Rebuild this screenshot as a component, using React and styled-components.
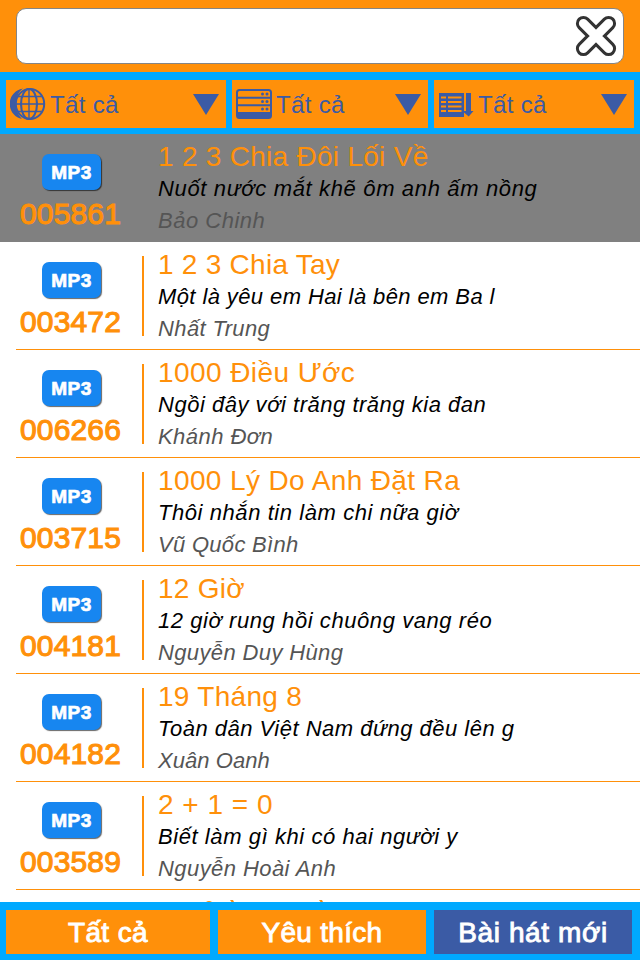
import React from "react";
import styled, { createGlobalStyle } from "styled-components";

const ORANGE = "#ff900a";
const SKY = "#00a9ff";
const NAVY = "#3b5ba5";

const GlobalStyle = createGlobalStyle`
  * { box-sizing: border-box; }
  html, body { margin: 0; padding: 0; overflow: hidden; background: #fff; }
  body { font-family: "Liberation Sans", Arial, Helvetica, sans-serif; }
`;

const Screen = styled.div`
  width: 640px;
  height: 960px;
  display: flex;
  flex-direction: column;
  overflow: hidden;
  background: #fff;
`;

const Header = styled.header`
  flex: none;
  height: 72px;
  padding: 8px 16px;
  background: ${ORANGE};
`;

const SearchField = styled.div`
  height: 56px;
  display: flex;
  align-items: center;
  justify-content: flex-end;
  padding-right: 6px;
  background: #fff;
  border: 1px solid #858585;
  border-radius: 10px;
`;

const FilterBar = styled.div`
  flex: none;
  height: 62px;
  display: grid;
  grid-template-columns: 220px 196px 200px;
  grid-template-rows: 48px;
  column-gap: 6px;
  padding: 8px 6px 6px;
  background: ${SKY};
`;

const Filter = styled.button`
  display: flex;
  align-items: center;
  border: 0;
  padding: 0 7px 0 4px;
  background: ${ORANGE};
  color: ${NAVY};
  font-family: inherit;
  font-size: 24px;
  line-height: 46px;
  text-align: left;

  svg { flex: none; display: block; }
`;

const FilterLabel = styled.span`
  flex: 1;
  padding: 1px 0 0 4px;
  letter-spacing: 0.35px;
  white-space: nowrap;
`;

const List = styled.main`
  flex: 1;
  min-height: 0;
  overflow: hidden;
`;

const Row = styled.article`
  height: 108px;
  display: flex;
  background: ${(p) => (p.$selected ? "#808080" : "#fff")};
  background-image: ${(p) =>
    p.$selected ? "none" : `linear-gradient(${ORANGE}, ${ORANGE})`};
  background-size: 624px 1px;
  background-position: 16px 107px;
  background-repeat: no-repeat;
`;

const CodeColumn = styled.div`
  width: 144px;
  height: 80px;
  margin-top: 14px;
  padding-top: 6px;
  border-right: 2px solid ${(p) => (p.$selected ? "transparent" : ORANGE)};
`;

const Badge = styled.div`
  width: 59px;
  height: 36px;
  margin-left: 42px;
  border-radius: 7px;
  background: #1786f0;
  box-shadow: 1px 1px 1px rgba(0, 0, 0, 0.6);
  color: #fff;
  font-size: 19px;
  font-weight: 700;
  line-height: 37px;
  letter-spacing: 0.4px;
  text-align: center;
  -webkit-text-stroke: 0.7px #fff;
`;

const Code = styled.div`
  margin: 6px 0 0 20px;
  color: ${ORANGE};
  font-size: 30px;
  line-height: 36px;
  letter-spacing: 0.15px;
  -webkit-text-stroke: 1.1px ${ORANGE};
`;

const Info = styled.div`
  padding: 6px 0 0 14px;
  white-space: nowrap;
`;

const Title = styled.div`
  height: 34px;
  line-height: 34px;
  font-size: 28px;
  letter-spacing: ${(p) => p.$spacing}px;
  color: ${ORANGE};
`;

const Lyric = styled.div`
  height: 32px;
  line-height: 30px;
  font-size: 22px;
  font-style: italic;
  letter-spacing: ${(p) => p.$spacing}px;
  color: #000;
`;

const Artist = styled(Lyric)`
  color: #555;
`;

const NextRowEdge = styled.svg`
  display: block;
  width: 640px;
  height: 12px;
`;

const TabBar = styled.nav`
  flex: none;
  height: 58px;
  display: grid;
  grid-template-columns: 204px 208px 198px;
  grid-template-rows: 44px;
  column-gap: 8px;
  padding: 8px 6px 6px;
  background: ${SKY};
`;

const Tab = styled.button`
  border: 0;
  padding: 1px 0 0;
  background: ${(p) => (p.$active ? NAVY : ORANGE)};
  color: #fff;
  font-family: inherit;
  font-size: 28px;
  line-height: 43px;
  letter-spacing: ${(p) => p.$spacing}px;
  -webkit-text-stroke: 0.9px #fff;
`;

const ClearIcon = () => (
  <svg width="42" height="42" viewBox="0 0 42 42" strokeLinecap="round">
    <path d="M8.4 8.4L33.6 33.6M33.6 8.4L8.4 33.6" stroke="#333" strokeWidth="15" />
    <path d="M8.4 8.4L33.6 33.6M33.6 8.4L8.4 33.6" stroke="#fff" strokeWidth="9" />
  </svg>
);

const GlobeIcon = () => (
  <svg width="36" height="34" viewBox="0 0 36 34" fill="none" stroke={NAVY}>
    <path d="M13 1.5C-4.5 5 -4.5 28 12 32C4 25 4 9 13 1.5Z" fill={NAVY} stroke="none" />
    <circle cx="19.8" cy="17" r="16.4" fill={ORANGE} stroke="none" />
    <path d="M12 2C-3.5 7 -3.5 26 12 31.5C4 25 4 9 12 2Z" fill={NAVY} stroke="none" />
    <ellipse cx="20" cy="17" rx="14.2" ry="15" strokeWidth="2" />
    <ellipse cx="19" cy="17" rx="8" ry="15" strokeWidth="2.1" />
    <path d="M19 2V32M6 17H34M8 9.5H31.5M8 24.5H31.5" strokeWidth="1.4" />
  </svg>
);

const ServerIcon = () => (
  <svg width="36" height="30" viewBox="0 0 36 30">
    <rect x="1" y="1" width="34" height="28" rx="2.5" fill="none" stroke={NAVY} strokeWidth="2" />
    <path d="M1 8.7H35M1 16.3H35" stroke={NAVY} strokeWidth="2" />
    <path d="M1 23H35V26.5Q35 29 32.5 29H3.5Q1 29 1 26.5Z" fill={NAVY} />
    {[5, 12.5, 20].map((y) => (
      <g key={y} fill={NAVY}>
        <circle cx="26.5" cy={y} r="1.5" />
        <circle cx="31" cy={y} r="1.5" />
      </g>
    ))}
  </svg>
);

const SortIcon = () => (
  <svg width="36" height="28" viewBox="0 -2 36 28">
    <path d="M1 1H26V25H1Z" fill={NAVY} />
    <path d="M3 5.5H8M10 5.5H23.5M3 10H8M10 10H23.5M3 14.5H8M10 14.5H23.5M3 19H8M10 19H23.5" stroke={ORANGE} strokeWidth="2" />
    <path d="M28 1H33V19H35.5L30.7 24.5L26 20.5V19H28Z" fill={NAVY} />
  </svg>
);

const ArrowIcon = () => (
  <svg width="26" height="21" viewBox="0 0 26 21">
    <path d="M0 0H26L13 21Z" fill={NAVY} />
  </svg>
);

const filters = [GlobeIcon, ServerIcon, SortIcon];

const songs = [
  ["005861", "1 2 3 Chia Đôi Lối Về", "Nuốt nước mắt khẽ ôm anh ấm nồng", "Bảo Chinh", 0.28, 0.65, 0.5],
  ["003472", "1 2 3 Chia Tay", "Một là yêu em Hai là bên em Ba l", "Nhất Trung", 0.26, 0.4, 0.38],
  ["006266", "1000 Điều Ước", "Ngồi đây với trăng trăng kia đan", "Khánh Đơn", 0.43, 0.52, 0.45],
  ["003715", "1000 Lý Do Anh Đặt Ra", "Thôi nhắn tin làm chi nữa giờ", "Vũ Quốc Bình", 0.38, 0.57, 0.3],
  ["004181", "12 Giờ", "12 giờ rung hồi chuông vang réo", "Nguyễn Duy Hùng", 0.25, 0.57, 0.37],
  ["004182", "19 Tháng 8", "Toàn dân Việt Nam đứng đều lên g", "Xuân Oanh", 0.3, 0.5, 0.05],
  ["003589", "2 + 1 = 0", "Biết làm gì khi có hai người y", "Nguyễn Hoài Anh", 0.5, 0.57, 0.43],
];

export default function App() {
  return (
    <>
      <GlobalStyle />
      <Screen>
        <Header>
          <SearchField><ClearIcon /></SearchField>
        </Header>
        <FilterBar>
          {filters.map((Icon, i) => (
            <Filter key={i}>
              <Icon />
              <FilterLabel>Tất cả</FilterLabel>
              <ArrowIcon />
            </Filter>
          ))}
        </FilterBar>
        <List>
          {songs.map(([code, title, lyric, artist, ts, ls, as], i) => (
            <Row key={code} $selected={i === 0}>
              <CodeColumn $selected={i === 0}>
                <Badge>MP3</Badge>
                <Code>{code}</Code>
              </CodeColumn>
              <Info>
                <Title $spacing={ts}>{title}</Title>
                <Lyric $spacing={ls}>{lyric}</Lyric>
                <Artist $spacing={as}>{artist}</Artist>
              </Info>
            </Row>
          ))}
          <NextRowEdge viewBox="0 0 640 12" fill={ORANGE}>
            <path d="M206 12Q209 10 212 12Z" />
            <path d="M230 10H233L234 12H231.5Z" />
            <path d="M319 10H322L323 12H320.5Z" />
          </NextRowEdge>
        </List>
        <TabBar>
          <Tab $spacing={0.4}>Tất cả</Tab>
          <Tab $spacing={0.3}>Yêu thích</Tab>
          <Tab $spacing={0.6} $active>Bài hát mới</Tab>
        </TabBar>
      </Screen>
    </>
  );
}
